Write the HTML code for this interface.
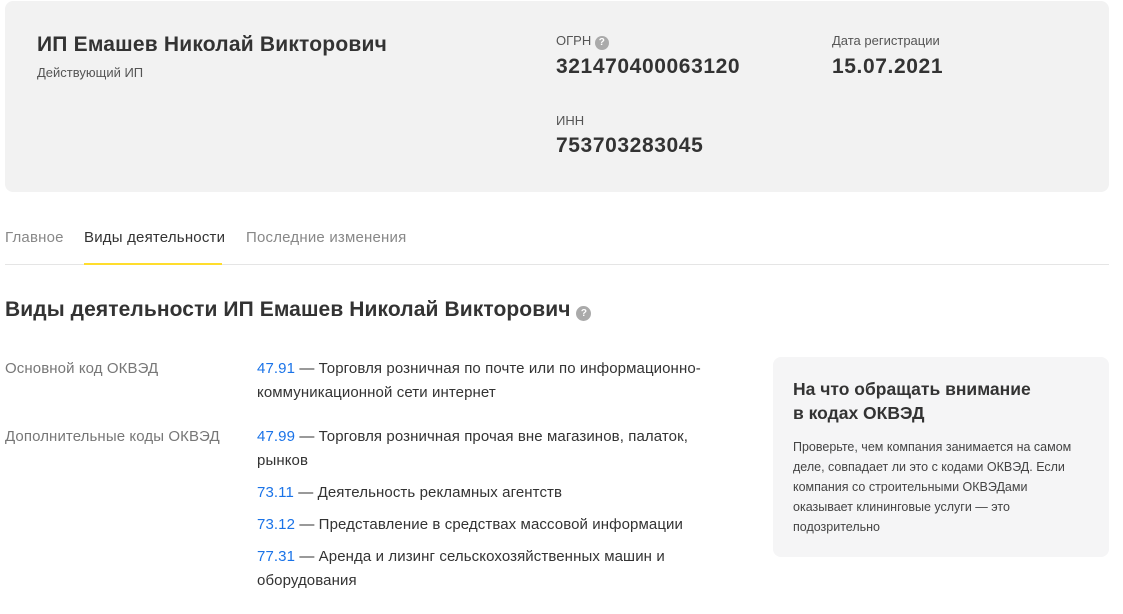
<!DOCTYPE html>
<html><head><meta charset="utf-8"><style>
body{margin:0;width:1123px;height:614px;background:#fff;font-family:"Liberation Sans",sans-serif;color:#333;position:relative;overflow:hidden}
.a{position:absolute;white-space:nowrap}
.card{position:absolute;left:5px;top:1px;width:1104px;height:191px;background:#f2f2f2;border-radius:8px}
.lbl{font-size:13px;color:#555}
.big{font-size:21px;font-weight:bold;color:#333;letter-spacing:0.6px}
.tab{font-size:15px;color:#888;top:229px;letter-spacing:0.2px}
.q{display:inline-block;width:14px;height:14px;border-radius:50%;background:#aaa;color:#fff;font-size:10px;font-weight:bold;text-align:center;line-height:14px;vertical-align:0px}
.row{font-size:15px;line-height:24px;color:#333;letter-spacing:0.1px}
.row b{font-weight:normal;color:#1a73e8}
.side{position:absolute;left:773px;top:357px;width:336px;height:200px;background:#f5f5f6;border-radius:8px}
</style></head><body>
<div class="card"></div>
<div class="a" style="left:37px;top:33px;font-size:21px;font-weight:bold;letter-spacing:0.2px">ИП Емашев Николай Викторович</div>
<div class="a lbl" style="left:37px;top:65px">Действующий ИП</div>
<div class="a lbl" style="left:556px;top:33px">ОГРН <span class="q">?</span></div>
<div class="a big" style="left:556px;top:55px">321470400063120</div>
<div class="a lbl" style="left:832px;top:33px">Дата регистрации</div>
<div class="a big" style="left:832px;top:55px">15.07.2021</div>
<div class="a lbl" style="left:556px;top:113px">ИНН</div>
<div class="a big" style="left:556px;top:134px">753703283045</div>
<div class="a tab" style="left:5px">Главное</div>
<div class="a tab" style="left:84px;color:#333">Виды деятельности</div>
<div class="a tab" style="left:246px">Последние изменения</div>
<div class="a" style="left:5px;top:264px;width:1104px;height:1px;background:#e5e5e5"></div>
<div class="a" style="left:84px;top:263px;width:138px;height:2px;background:#ffdd2d"></div>
<div class="a" style="left:5px;top:298px;font-size:21px;font-weight:bold;letter-spacing:0.1px">Виды деятельности ИП Емашев Николай Викторович <span class="q" style="width:15px;height:15px;line-height:15px">?</span></div>
<div class="a row" style="left:5px;top:357px;color:#777">Основной код ОКВЭД</div>
<div class="a row" style="left:5px;top:425px;color:#777">Дополнительные коды ОКВЭД</div>
<div class="a row" style="left:257px;top:357px"><b>47.91</b> — Торговля розничная по почте или по информационно-<br>коммуникационной сети интернет</div>
<div class="a row" style="left:257px;top:425px"><b>47.99</b> — Торговля розничная прочая вне магазинов, палаток,<br>рынков</div>
<div class="a row" style="left:257px;top:481px"><b>73.11</b> — Деятельность рекламных агентств</div>
<div class="a row" style="left:257px;top:513px"><b>73.12</b> — Представление в средствах массовой информации</div>
<div class="a row" style="left:257px;top:545px"><b>77.31</b> — Аренда и лизинг сельскохозяйственных машин и<br>оборудования</div>
<div class="side"></div>
<div class="a" style="left:793px;top:377px;font-size:17.5px;font-weight:bold;line-height:24px">На что обращать внимание<br>в кодах ОКВЭД</div>
<div class="a" style="left:793px;top:437px;font-size:12.5px;line-height:20px;color:#444">Проверьте, чем компания занимается на самом<br>деле, совпадает ли это с кодами ОКВЭД. Если<br>компания со строительными ОКВЭДами<br>оказывает клининговые услуги — это<br>подозрительно</div>
</body></html>
